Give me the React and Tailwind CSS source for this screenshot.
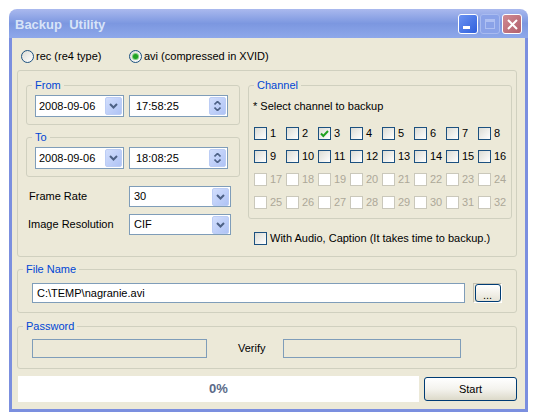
import React from 'react'

const channels = Array.from({ length: 32 }, (_, i) => i + 1)

function Chevron() {
  return (
    <svg width="9" height="6" viewBox="0 0 9 6">
      <path d="M1 1 L4.5 4.5 L8 1" fill="none" stroke="#4d6185" strokeWidth="2" />
    </svg>
  )
}

function DropButton() {
  return (
    <span className="w-[17px] h-[18px] shrink-0 rounded-[2px] border border-[#bccdf5] bg-linear-to-br from-[#d2defc] to-[#afc3f5] flex items-center justify-center">
      <Chevron />
    </span>
  )
}

function Combo({ value, className, padText = 'pl-[3px]' }) {
  return (
    <div className={`flex items-center border border-[#7f9db9] bg-white pr-[1px] ${className}`}>
      <span className={`flex-1 ${padText}`}>{value}</span>
      <DropButton />
    </div>
  )
}

function TimeField({ value }) {
  return (
    <div className="flex items-center w-[99px] h-[22px] border border-[#7f9db9] bg-white pr-[1px]">
      <span className="flex-1 pl-[6px]">{value}</span>
      <span className="w-[17px] h-[18px] rounded-[2px] border border-[#bccdf5] bg-linear-to-br from-[#d2defc] to-[#afc3f5] flex flex-col items-center justify-center gap-[2px]">
        <svg width="7" height="4" viewBox="0 0 7 4">
          <path d="M0.5 3.5 L3.5 0.5 L6.5 3.5" fill="none" stroke="#4d6185" strokeWidth="1.6" />
        </svg>
        <svg width="7" height="4" viewBox="0 0 7 4">
          <path d="M0.5 0.5 L3.5 3.5 L6.5 0.5" fill="none" stroke="#4d6185" strokeWidth="1.6" />
        </svg>
      </span>
    </div>
  )
}

function Check({ checked, disabled }) {
  return (
    <span
      className={`w-[13px] h-[13px] shrink-0 border flex items-center justify-center ${
        disabled ? 'border-[#cac8bb] bg-white' : 'border-[#1c5180] bg-linear-to-br from-[#dcdcd5] to-white'
      }`}
    >
      {checked && (
        <svg width="9" height="8" viewBox="0 0 9 8">
          <path d="M1 3.5 L3.3 6 L8 1" fill="none" stroke="#21a121" strokeWidth="2" />
        </svg>
      )}
    </span>
  )
}

function Radio({ checked, label, className }) {
  return (
    <div className={`flex items-center gap-[2px] ${className}`}>
      <span className="w-[13px] h-[13px] rounded-full border border-[#1c5180] bg-linear-to-br from-[#dcdcd5] to-white flex items-center justify-center">
        {checked && <span className="w-[5px] h-[5px] rounded-full bg-[#21a121] shadow-[0_0_0_1px_#7fcf7f]" />}
      </span>
      <span>{label}</span>
    </div>
  )
}

function Group({ label, className, children }) {
  return (
    <fieldset className={`border border-[#d0d0bf] rounded-[3px] ${className}`}>
      <legend className="ml-[5px] px-[3px] leading-[14px] text-[#0046d5]">{label}</legend>
      {children}
    </fieldset>
  )
}

export default function App() {
  return (
    <div className="w-[537px] h-[420px] bg-white pt-[9px] pl-[9px] font-['Liberation_Sans',Arial,sans-serif] text-[11px] text-black">
      <div className="w-[519px] h-[403px] flex flex-col rounded-t-[8px] overflow-hidden">
        {/* Title bar (inactive XP style) */}
        <div className="h-[29px] shrink-0 flex items-center pl-[6px] pr-[6px] bg-linear-to-b from-[#aab9ee] via-[#7c97e0] to-[#8ea8ea]">
          <span className="whitespace-pre font-bold text-[13px] text-[#d8e4f8] pt-[3px]">Backup  Utility</span>
          <div className="ml-auto flex gap-[2px] pt-[1px]">
            <span className="w-[20px] h-[20px] rounded-[3px] border border-white bg-linear-to-br from-[#6b92f2] to-[#2f5fdc] relative">
              <span className="absolute left-[4px] top-[11px] w-[7px] h-[3px] bg-white" />
            </span>
            <span className="w-[20px] h-[20px] rounded-[3px] border border-[#a9bbf0] bg-[#8aa2e8] flex items-center justify-center">
              <span className="w-[10px] h-[10px] border border-[#aebff2] border-t-[3px]" />
            </span>
            <span className="w-[20px] h-[20px] rounded-[3px] border border-white bg-linear-to-br from-[#d08a93] to-[#b2606c] flex items-center justify-center">
              <svg width="11" height="11" viewBox="0 0 11 11">
                <path d="M1 1 L10 10 M10 1 L1 10" stroke="white" strokeWidth="2" />
              </svg>
            </span>
          </div>
        </div>

        {/* Body */}
        <div className="flex-1 bg-[#ece9d8] border-x-[3px] border-b-[3px] border-[#7b8fdf] flex flex-col pl-[5px]">
          <div className="flex items-center h-[13px] mt-[12px] ml-[4px]">
            <Radio label="rec (re4 type)" className="w-[108px]" />
            <Radio checked label="avi (compressed in XVID)" />
          </div>

          {/* Main options */}
          <div className="mt-[7px] w-[500px] h-[187px] border border-[#d0d0bf] rounded-[3px] flex items-start">
            <div className="w-[214px] ml-[8px] mt-[7px] flex flex-col">
              <Group label="From">
                <div className="flex gap-[5px] pt-[3px] pl-[8px] pb-[7px]">
                  <Combo value="2008-09-06" className="w-[89px] h-[22px]" />
                  <TimeField value="17:58:25" />
                </div>
              </Group>
              <Group label="To" className="mt-[5px]">
                <div className="flex gap-[5px] pt-[3px] pl-[8px] pb-[7px]">
                  <Combo value="2008-09-06" className="w-[89px] h-[22px]" />
                  <TimeField value="18:08:25" />
                </div>
              </Group>
              <div className="flex items-center mt-[9px]">
                <span className="w-[103px] pl-[3px]">Frame Rate</span>
                <Combo value="30" className="w-[102px] h-[21px]" padText="pl-[4px]" />
              </div>
              <div className="flex items-center mt-[7px]">
                <span className="w-[103px] pl-[2px]">Image Resolution</span>
                <Combo value="CIF" className="w-[102px] h-[21px]" padText="pl-[4px]" />
              </div>
            </div>

            <div className="ml-[8px] mt-[7px] flex flex-col">
              <Group label="Channel" className="w-[264px]">
                <div className="pt-[8px] pl-[4px] pb-[9px]">
                  <p className="leading-[13px]">* Select channel to backup</p>
                  <div className="mt-[14px] ml-[1px] grid grid-cols-[repeat(8,32px)] gap-y-[10px]">
                    {channels.map((n) => (
                      <label key={n} className={`flex items-center gap-[3px] leading-[13px] ${n > 16 ? 'text-[#aca899]' : ''}`}>
                        <Check checked={n === 3} disabled={n > 16} />
                        <span>{n}</span>
                      </label>
                    ))}
                  </div>
                </div>
              </Group>
              <label className="flex items-center gap-[3px] ml-[6px] mt-[13px] leading-[13px]">
                <Check />
                <span>With Audio, Caption (It takes time to backup.)</span>
              </label>
            </div>
          </div>

          {/* File name */}
          <Group label="File Name" className="mt-[5px] w-[500px]">
            <div className="flex items-center pt-[7px] pl-[14px] pb-[9px]">
              <div className="w-[433px] h-[20px] border border-[#7f9db9] bg-white flex items-center pl-[4px]">
                C:\TEMP\nagranie.avi
              </div>
              <div className="ml-[8px] w-[29px] h-[20px] border-t border-l border-[#c4c0b0] border-r border-b border-r-white border-b-white flex items-center justify-center">
                <button className="w-[26px] h-[18px] rounded-[3px] border border-[#003c74] bg-linear-to-b from-white to-[#e6e3d6] leading-[10px] pt-[4px]">
                  ...
                </button>
              </div>
            </div>
          </Group>

          {/* Password */}
          <Group label="Password" className="mt-[6px] w-[500px]">
            <div className="flex items-center pt-[6px] pl-[14px] pb-[10px]">
              <div className="w-[175px] h-[19px] border border-[#7f9db9] bg-[#ece9d8]" />
              <span className="ml-[31px] w-[45px]">Verify</span>
              <div className="w-[178px] h-[19px] border border-[#7f9db9] bg-[#ece9d8]" />
            </div>
          </Group>

          {/* Progress + start */}
          <div className="flex items-start mt-[7px]">
            <div className="ml-[1px] w-[401px] h-[26px] bg-white flex items-center justify-center font-bold text-[13px] text-[#5a6a88]">
              0%
            </div>
            <button className="ml-[5px] mt-[1px] w-[93px] h-[24px] rounded-[3px] border border-[#003c74] bg-linear-to-b from-white via-[#f4f3ee] to-[#dcd9c9] flex items-center justify-center">
              Start
            </button>
          </div>
        </div>
      </div>
    </div>
  )
}
